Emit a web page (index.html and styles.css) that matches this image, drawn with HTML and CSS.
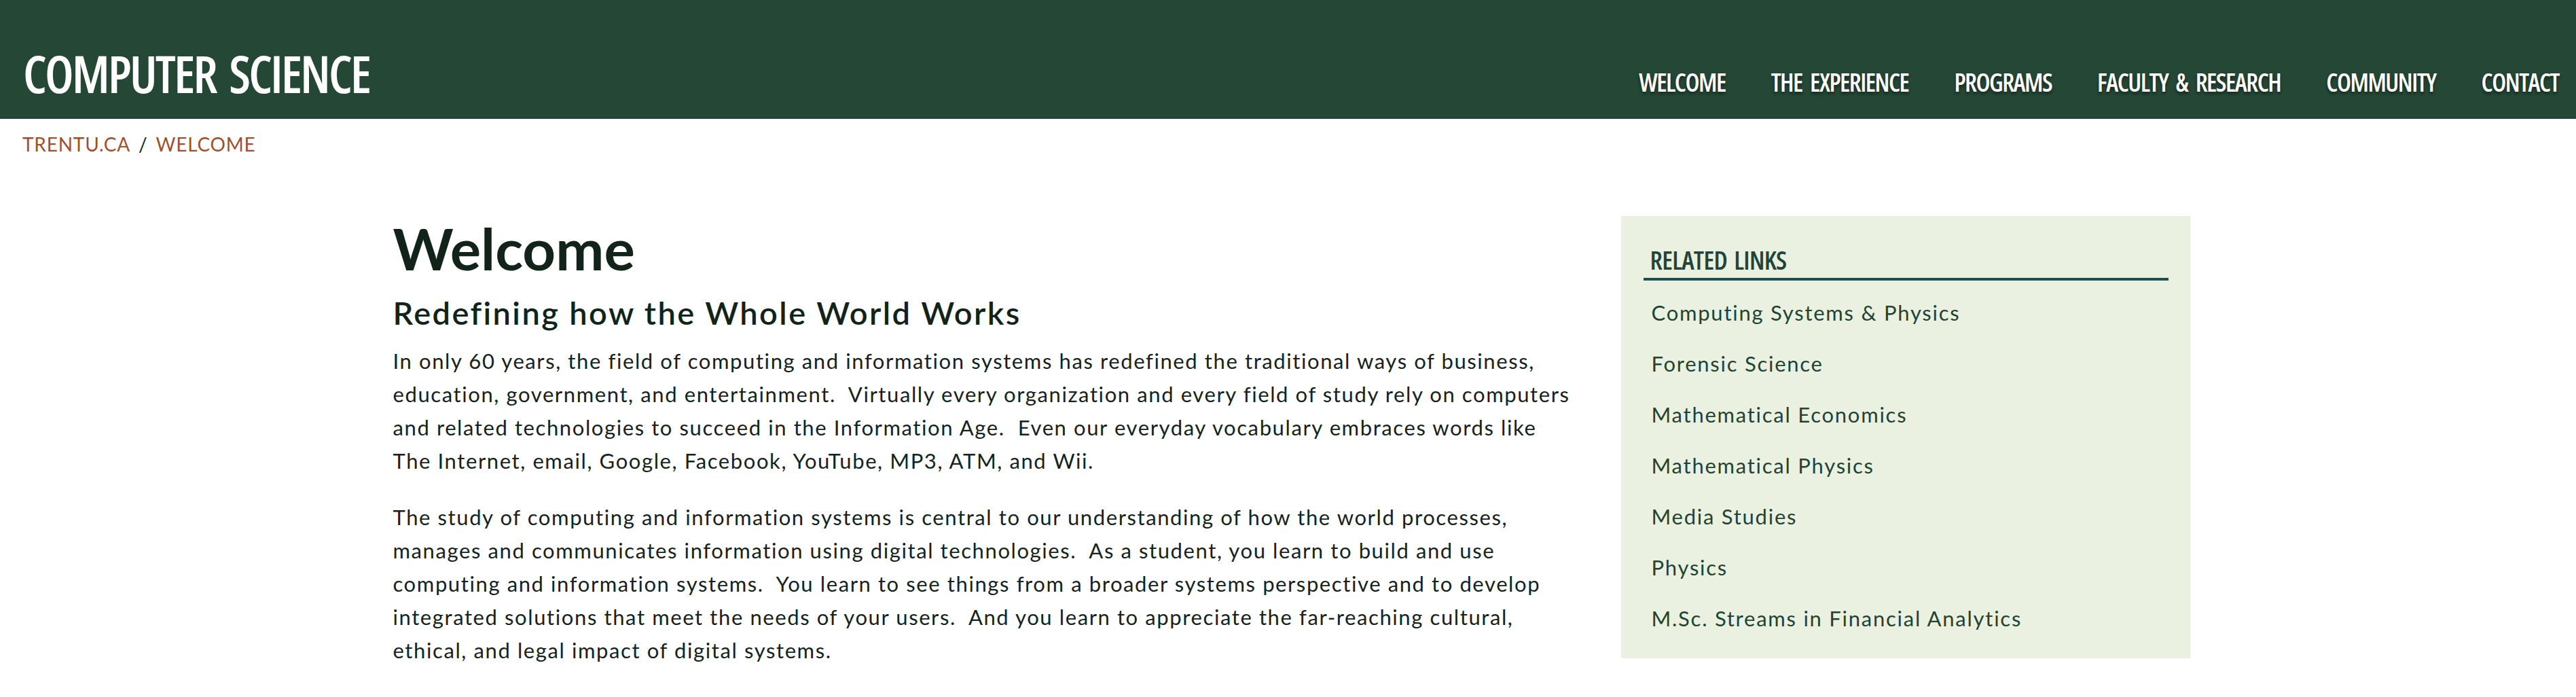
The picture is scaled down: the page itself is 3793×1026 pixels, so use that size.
FILE: index.html
```html
<!DOCTYPE html>
<html lang="en">
<head>
<meta charset="utf-8">
<title>Computer Science - Welcome</title>
<link rel="stylesheet" href="styles.css">
</head>
<body>
<header class="site-header">
  <a class="site-title" href="#">COMPUTER SCIENCE</a>
  <nav class="main-nav">
    <ul>
      <li><a href="#">WELCOME</a></li>
      <li><a href="#">THE EXPERIENCE</a></li>
      <li><a href="#">PROGRAMS</a></li>
      <li><a href="#">FACULTY &amp; RESEARCH</a></li>
      <li><a href="#">COMMUNITY</a></li>
      <li><a href="#">CONTACT</a></li>
    </ul>
  </nav>
</header>
<div class="breadcrumb"><a href="#">TRENTU.CA</a><span class="sep">/</span><a href="#">WELCOME</a></div>
<div class="container">
  <main class="content">
    <h1>Welcome</h1>
    <h2>Redefining how the Whole World Works</h2>
    <p>In only 60 years, the field of computing and information systems has redefined the traditional ways of business,<br>education, government, and entertainment.&nbsp; Virtually every organization and every field of study rely on computers<br>and related technologies to succeed in the Information Age.&nbsp; Even our everyday vocabulary embraces words like<br>The Internet, email, Google, Facebook, YouTube, MP3, ATM, and Wii.</p>
    <p>The study of computing and information systems is central to our understanding of how the world processes,<br>manages and communicates information using digital technologies.&nbsp; As a student, you learn to build and use<br>computing and information systems.&nbsp; You learn to see things from a broader systems perspective and to develop<br>integrated solutions that meet the needs of your users.&nbsp; And you learn to appreciate the far-reaching cultural,<br>ethical, and legal impact of digital systems.</p>
  </main>
  <aside class="sidebar">
    <h3>RELATED LINKS</h3>
    <ul>
      <li><a href="#">Computing Systems &amp; Physics</a></li>
      <li><a href="#">Forensic Science</a></li>
      <li><a href="#">Mathematical Economics</a></li>
      <li><a href="#">Mathematical Physics</a></li>
      <li><a href="#">Media Studies</a></li>
      <li><a href="#">Physics</a></li>
      <li><a href="#">M.Sc. Streams in Financial Analytics</a></li>
    </ul>
  </aside>
</div>
</body>
</html>
```
FILE: styles.css
```css
html, body {
  margin: 0;
  padding: 0;
  background: #ffffff;
}
body {
  font-family: Lato, "Open Sans", sans-serif;
  color: #14231b;
}
a {
  text-decoration: none;
  color: inherit;
}

.site-header {
  display: flex;
  justify-content: space-between;
  align-items: flex-start;
  height: 175px;
  box-sizing: border-box;
  padding: 0 25px 0 34px;
  background: #244736;
}
.site-title {
  display: block;
  margin-top: 70px;
  font-family: "Open Sans", sans-serif;
  font-stretch: 75%;
  font-weight: 600;
  font-size: 75px;
  line-height: 76px;
  letter-spacing: -2.7px;
  word-spacing: 8px;
  color: #ffffff;
}
.main-nav {
  margin-top: 102px;
}
.main-nav ul {
  display: flex;
  gap: 67px;
  margin: 0;
  padding: 0;
  list-style: none;
}
.main-nav a {
  display: block;
  font-family: "Open Sans", sans-serif;
  font-stretch: 75%;
  font-weight: 600;
  font-size: 37px;
  line-height: 38px;
  letter-spacing: -1.5px;
  word-spacing: 6px;
  color: #ffffff;
  text-shadow: 0 3px 4px rgba(0, 0, 0, 0.45);
}

.breadcrumb {
  margin-top: 23px;
  padding-left: 33px;
  font-size: 28px;
  line-height: 28px;
  letter-spacing: 0.8px;
  color: #a0502a;
}
.breadcrumb .sep {
  margin: 0 12px;
  color: #14231b;
}

.container {
  display: grid;
  grid-template-columns: 1750px 838px;
  column-gap: 58px;
  justify-content: center;
  padding-left: 10px;
  margin-top: 92px;
}

.content h1 {
  margin: 5px 0 0;
  font-size: 85px;
  line-height: 84px;
  font-weight: 700;
  color: #12241a;
}
.content h2 {
  margin: 26px 0 0;
  font-size: 47px;
  line-height: 55px;
  letter-spacing: 2.4px;
  font-weight: 600;
  color: #12241a;
}
.content p {
  margin: 19px 0 0;
  font-size: 31px;
  line-height: 49px;
  letter-spacing: 1.6px;
  white-space: nowrap;
}
.content p + p {
  margin-top: 34px;
}

.sidebar {
  align-self: start;
  height: 651px;
  box-sizing: border-box;
  padding: 45px 32px 0 33px;
  background: #ebf1e1;
}
.sidebar h3 {
  margin: 0;
  padding: 0 0 8px 10px;
  border-bottom: 4px solid #1f4e4f;
  font-family: "Open Sans", sans-serif;
  font-stretch: 75%;
  font-weight: 600;
  font-size: 38px;
  line-height: 38px;
  letter-spacing: -0.7px;
  word-spacing: 4px;
  color: #234436;
}
.sidebar ul {
  margin: 10px 0 0;
  padding: 0;
  list-style: none;
}
.sidebar li {
  padding-left: 12px;
  font-size: 31px;
  line-height: 75px;
  letter-spacing: 1.75px;
  color: #1f4433;
}
```
